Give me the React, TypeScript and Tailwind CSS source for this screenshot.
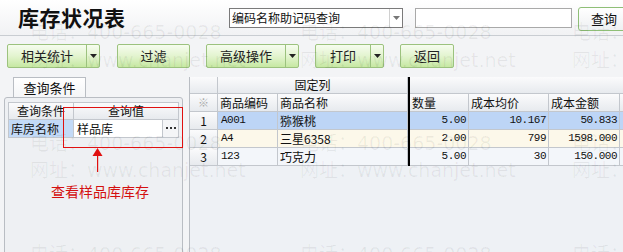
import React from 'react';

const cjk = { fontFamily: '"Noto Sans CJK SC", "Liberation Sans", sans-serif' };
const mono = { fontFamily: '"Liberation Mono", "Noto Sans CJK SC", monospace' };

function Caret({ color = '#222' }: { color?: string }) {
  return (
    <svg width="7" height="4" viewBox="0 0 7 4">
      <path d="M0 0 H7 L3.5 4 Z" fill={color} />
    </svg>
  );
}

function GreenButton({ label, width, split }: { label: string; width: number; split?: boolean }) {
  return (
    <div className="flex h-[24px] shrink-0 rounded-[2px] border border-[#9cc27e] bg-gradient-to-b from-[#f6fcef] via-[#e3f4cf] to-[#c6e8a2] text-[13px] text-[#222]">
      <div style={{ width }} className="flex items-center justify-center">{label}</div>
      {split && (
        <div className="flex w-[13px] items-center justify-center border-l border-[#9cc27e]">
          <Caret />
        </div>
      )}
    </div>
  );
}

type Row = { no: string; code: string; name: string; qty: string; price: string; amount: string; bg: string };

const rows: Row[] = [
  { no: '1', code: 'A001', name: '猕猴桃', qty: '5.00', price: '10.167', amount: '50.833', bg: 'bg-[#bdd5f6]' },
  { no: '2', code: 'A4', name: '三星6358', qty: '2.00', price: '799', amount: '1598.000', bg: 'bg-[#fcf8ea]' },
  { no: '3', code: '123', name: '巧克力', qty: '5.00', price: '30', amount: '150.000', bg: 'bg-[#f3f6fa]' },
];

const headCell = 'shrink-0 border-r border-b border-[#c3c7cd] bg-gradient-to-b from-[#fbfbfc] to-[#e7eaee] flex items-center';
const dataCell = 'flex shrink-0 items-center border-r border-b border-[#c3c7cd]';
const numCell = `${dataCell} justify-end pr-[2px] text-[11px] tracking-[-0.5px]`;

export default function App() {
  const marks = [
    { top: 18, text: '电话：400-665-0028' },
    { top: 46, text: '网址：www.chanjet.net' },
    { top: 129, text: '电话：400-665-0028' },
    { top: 156, text: '网址：www.chanjet.net' },
    { top: 240, text: '电话：400-665-0028' },
  ];

  return (
    <div className="relative h-[252px] w-[623px] overflow-hidden bg-[#f3f4f6] text-[12px] text-[#111]" style={cjk}>
      {/* Header */}
      <div className="flex h-[36px] border-b border-[#c9cdd2] bg-gradient-to-b from-white to-[#f1f2f4]">
        <div className="w-[229px] shrink-0 pl-[18px] pt-[2px] text-[21px] font-bold tracking-[0.5px] text-[#111]">库存状况表</div>
        <div className="mt-[8px] flex h-[20px] w-[174px] shrink-0 border border-[#7a7a7a] bg-white">
          <div className="flex flex-1 items-center pl-[2px] text-[12px]">编码名称助记码查询</div>
          <div className="flex w-[13px] items-center justify-center border-l border-[#d0d0d0]">
            <Caret color="#777" />
          </div>
        </div>
        <div className="ml-[12px] mt-[8px] h-[20px] w-[157px] shrink-0 border border-[#a9a9a9] bg-white" />
        <div className="ml-[6px] mt-[7px] flex h-[24px] w-[52px] shrink-0 items-center justify-center rounded-[3px] border border-[#8fbf77] bg-gradient-to-b from-white to-[#eef0f2] text-[13px]">
          查询
        </div>
      </div>

      {/* Toolbar */}
      <div className="flex h-[36px] items-start pl-[7px] pt-[8px]">
        <GreenButton label="相关统计" width={78} split />
        <div className="ml-[17px]"><GreenButton label="过滤" width={71} /></div>
        <div className="ml-[16px]"><GreenButton label="高级操作" width={78} split /></div>
        <div className="ml-[16px]"><GreenButton label="打印" width={54} split /></div>
        <div className="ml-[16px]"><GreenButton label="返回" width={52} /></div>
      </div>

      {/* Body */}
      <div className="flex h-[190px] pt-[5px]">
        {/* Left panel */}
        <div className="flex w-[189px] shrink-0 flex-col">
          <div className="ml-[13px] flex h-[20px] w-[73px] items-center justify-center border border-b-0 border-[#b9bdc3] bg-gradient-to-b from-white to-[#f4f5f7] text-[13px]">
            查询条件
          </div>
          <div className="ml-[4px] w-[179px] flex-1 rounded-t-[3px] border border-[#b9bdc3] bg-[#eef0f3] px-[3px] pt-[4px]">
            <div className="flex h-[17px] border border-b-0 border-[#c3c7cd]">
              <div className={`${headCell} w-[65px] justify-center border-b-0`}>查询条件</div>
              <div className={`${headCell} flex-1 justify-center border-b-0 border-r-0`}>查询值</div>
            </div>
            <div className="flex h-[19px] border border-[#c3c7cd]">
              <div className="flex w-[65px] shrink-0 items-center border-r border-[#c3c7cd] bg-[#c3daf7] pl-[2px]">库房名称</div>
              <div className="flex flex-1 items-center bg-white pl-[3px]">样品库</div>
              <div className="flex w-[16px] shrink-0 items-center justify-center border-l border-[#c3c7cd] bg-[#f4f5f7]">
                <svg width="10" height="3" viewBox="0 0 10 3">
                  <rect x="0" y="0" width="2" height="2" fill="#333" />
                  <rect x="4" y="0" width="2" height="2" fill="#333" />
                  <rect x="8" y="0" width="2" height="2" fill="#333" />
                </svg>
              </div>
            </div>
          </div>
        </div>

        {/* Grid */}
        <div className="flex flex-1 flex-col border-l border-[#b9bdc3] bg-[#eef1f5]">
          <div className="flex h-[17px]">
            <div className={`${headCell} w-[28px]`} />
            <div className={`${headCell} w-[190px] justify-center text-[12px]`}>固定列</div>
            <div className="w-[2px] shrink-0 bg-black" />
            <div className={`${headCell} flex-1`} />
          </div>
          <div className="flex h-[18px]">
            <div className={`${headCell} w-[28px] justify-center text-[11px] text-[#aaa]`}>※</div>
            <div className={`${headCell} w-[60px] pl-[2px]`}>商品编码</div>
            <div className={`${headCell} w-[130px] pl-[2px]`}>商品名称</div>
            <div className="w-[2px] shrink-0 bg-black" />
            <div className={`${headCell} w-[59px] pl-[2px]`}>数量</div>
            <div className={`${headCell} w-[80px] pl-[2px]`}>成本均价</div>
            <div className={`${headCell} w-[71px] pl-[2px]`}>成本金额</div>
            <div className={`${headCell} flex-1 pl-[2px]`}>·</div>
          </div>
          {rows.map((r) => (
            <div key={r.no} className={`flex h-[18px] ${r.bg}`}>
              <div className={`${headCell} w-[28px] justify-center text-[12px]`}>{r.no}</div>
              <div className={`${dataCell} w-[60px] pl-[3px] text-[11px] tracking-[-0.5px]`} style={mono}>{r.code}</div>
              <div className={`${dataCell} w-[130px] pl-[2px] text-[12px]`}>{r.name}</div>
              <div className="w-[2px] shrink-0 bg-black" />
              <div className={`${numCell} w-[59px]`} style={mono}>{r.qty}</div>
              <div className={`${numCell} w-[80px]`} style={mono}>{r.price}</div>
              <div className={`${numCell} w-[71px]`} style={mono}>{r.amount}</div>
              <div className="flex-1 border-b border-[#c3c7cd]" />
            </div>
          ))}
        </div>
      </div>

      {/* Watermark */}
      {marks.map((m, i) =>
        [30, 300, 572].map((x) => (
          <div
            key={`${i}-${x}`}
            className="pointer-events-none absolute whitespace-nowrap text-[19px] text-black/[0.06]"
            style={{ top: m.top, left: x, fontFamily: '"DejaVu Sans", "Noto Sans CJK SC", sans-serif' }}
          >
            {m.text}
          </div>
        ))
      )}

      {/* Annotation */}
      <div className="pointer-events-none absolute left-[63px] top-[107px] h-[41px] w-[120px] border border-[#e01010]" />
      <svg className="pointer-events-none absolute left-[92px] top-[148px]" width="11" height="25" viewBox="0 0 11 25">
        <path d="M5.5 0 L10.5 8 H0.5 Z" fill="#e01010" />
        <rect x="5" y="8" width="1.2" height="16" fill="#e01010" />
      </svg>
      <div className="pointer-events-none absolute left-[51px] top-[181px] text-[14px] text-[#d41010]">查看样品库库存</div>
    </div>
  );
}
